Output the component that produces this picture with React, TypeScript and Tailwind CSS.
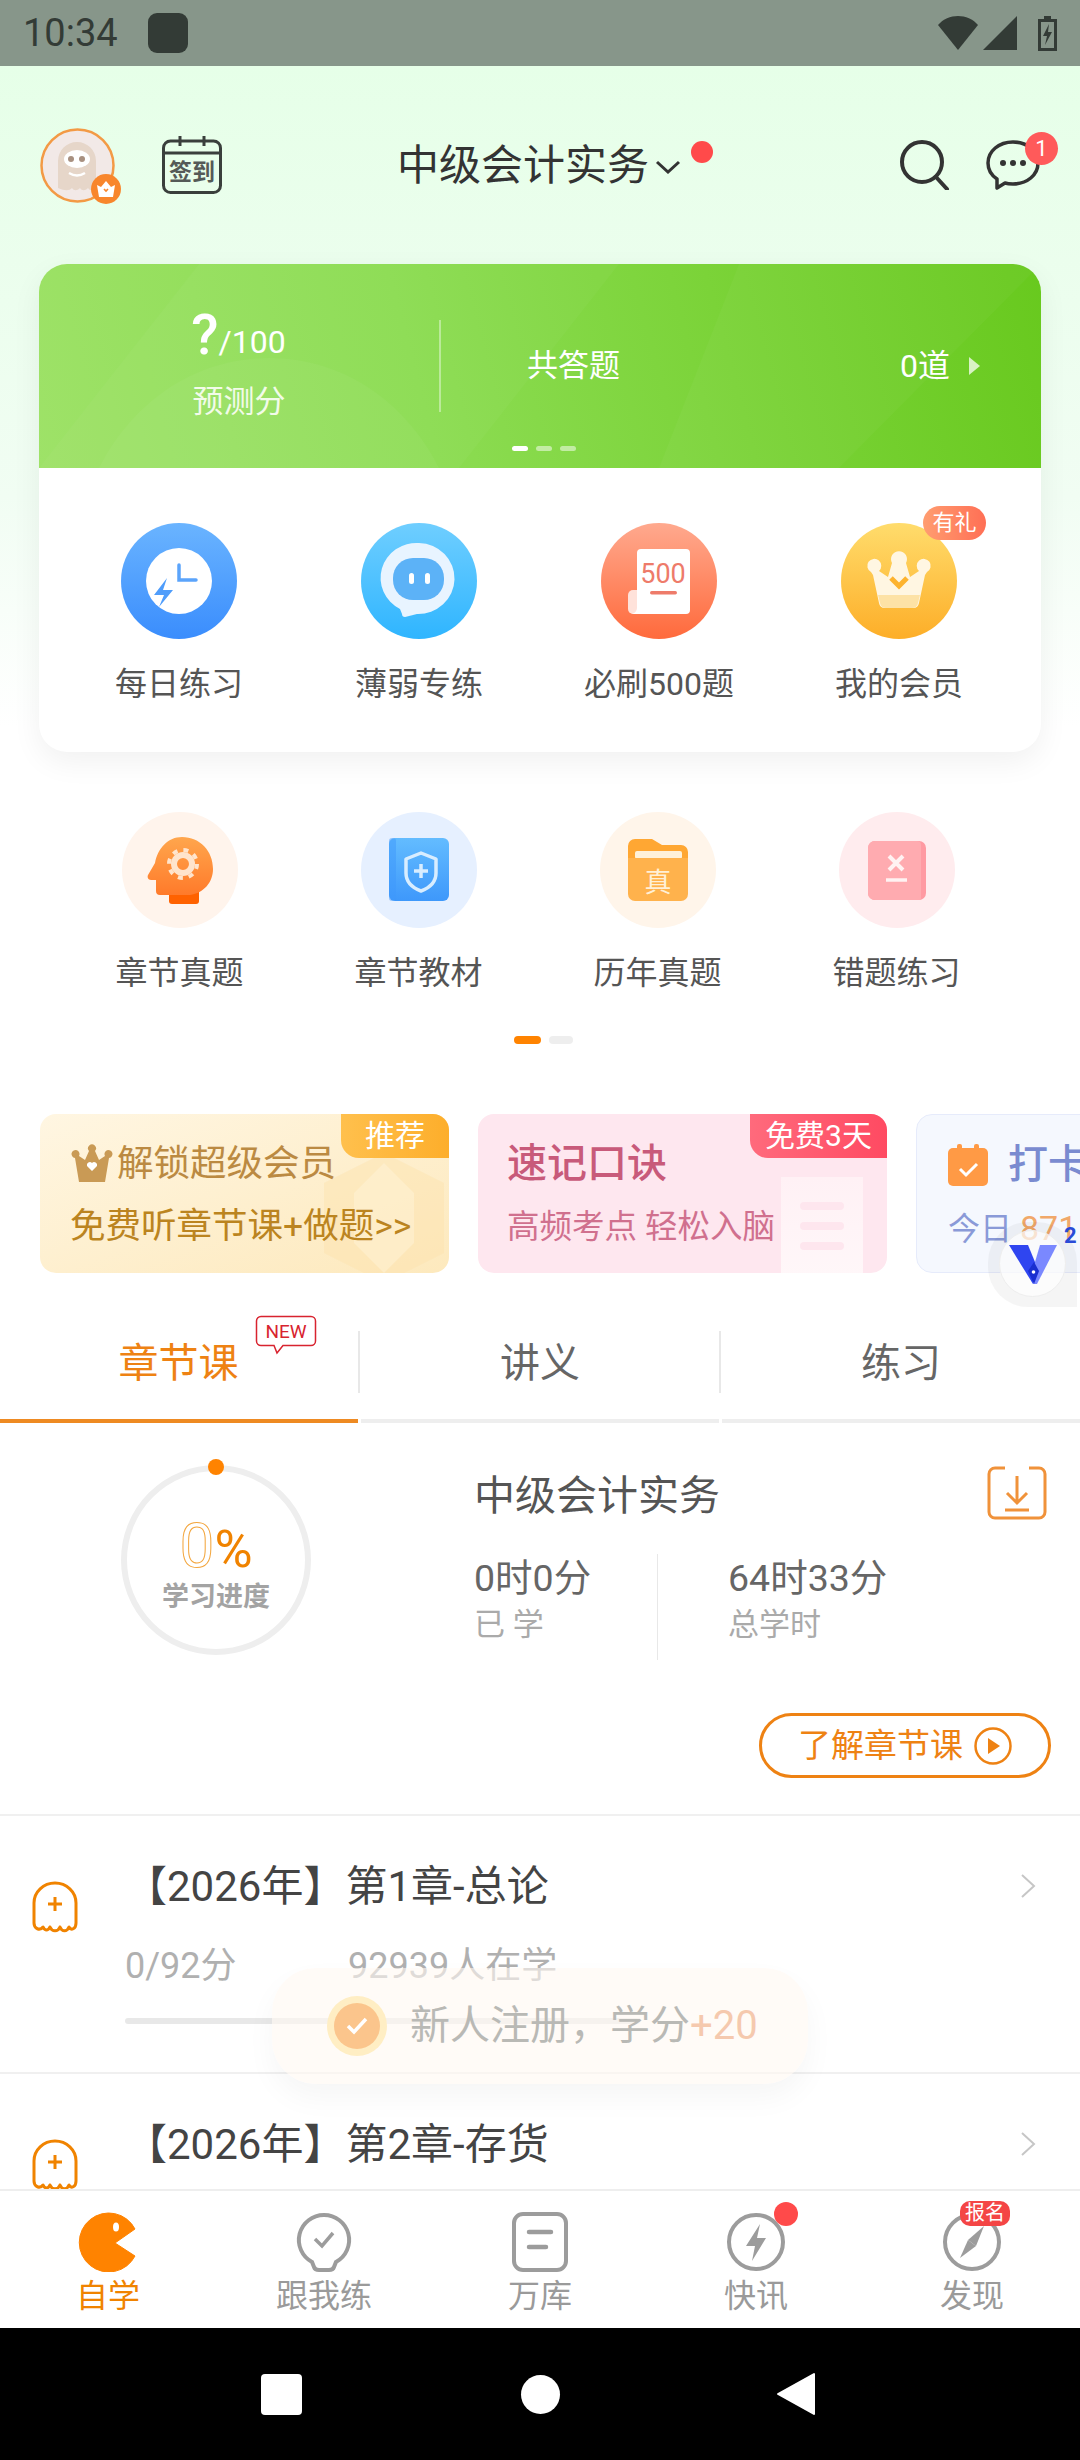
import type { ReactNode } from 'react';

function Ghost({ className }: { className: string }) {
  return (
    <svg viewBox="1 0 46 52" className={className} fill="none">
      <path
        d="M3 42V22a21 20 0 0 1 42 0v20c0 6-5 8-7 4-2 5-7 5-9 0-2 5-8 5-10 0-2 4-5 4-7 0-3 4-9 2-9-4z"
        stroke="#f08300"
        strokeWidth="3"
        strokeLinejoin="round"
      />
      <path d="M24 16v14M17 23h14" stroke="#f08300" strokeWidth="3" />
    </svg>
  );
}

function Avatar() {
  return (
    <div className="relative w-[75px] h-[75px]">
      <svg viewBox="0 0 75 75" className="w-[75px] h-[75px]">
        <circle cx="37.5" cy="37.5" r="36" fill="#f2e9e7" stroke="#f39a45" strokeWidth="2.5" />
        <path
          d="M18 60V33a19 19 0 0 1 38 0v27c-3 3-6 3-8 0-3 3-6 3-8 0-3 3-6 3-8 0-3 3-7 3-14 0z"
          fill="#e6d6c9"
        />
        <ellipse cx="37" cy="31" rx="13" ry="9" fill="#fff" />
        <circle cx="31" cy="31" r="3" fill="#a89080" />
        <circle cx="42" cy="31" r="3" fill="#a89080" />
        <path d="M29 45c5 3 11 3 16 0" stroke="#fff" strokeWidth="2.5" fill="none" />
      </svg>
      <div className="absolute right-[-6px] bottom-[-1px] w-[30px] h-[30px] rounded-full bg-[#f8862c] flex items-center justify-center">
        <svg viewBox="0 0 20 18" className="w-[20px] h-[18px]">
          <path d="M1 5l4 2 5-6 5 6 4-2-2 12H3z" fill="#fff" />
          <path d="M8 9l2 2 2-2" stroke="#f8862c" strokeWidth="1.6" fill="none" />
        </svg>
      </div>
    </div>
  );
}

function SignIcon() {
  return (
    <svg viewBox="0 0 60 58" className="w-[60px] h-[58px]">
      <rect x="1.5" y="5" width="57" height="51.5" rx="7" fill="none" stroke="#3a3f3c" strokeWidth="3" />
      <path d="M2 17h56M18 0v10M42 0v10" stroke="#3a3f3c" strokeWidth="3" />
      <text x="30" y="44" textAnchor="middle" fontSize="23" fontWeight="700" fill="#555a57" fontFamily="Noto Sans CJK SC">
        签到
      </text>
    </svg>
  );
}

const PRIMARY_ITEMS: { label: string; bg: string; icon: ReactNode; badge?: string }[] = [
  {
    label: '每日练习',
    bg: 'bg-[linear-gradient(180deg,#6ab4ff,#3a8dfd)]',
    icon: (
      <>
        <circle cx="58" cy="58" r="33" fill="#fff" />
        <path d="M58 42v15h17" stroke="#5ba4fb" strokeWidth="3.5" fill="none" strokeLinecap="round" />
        <path d="M46 55L33 72h10l-5 12 14-17H42z" fill="#4f9dfb" />
      </>
    ),
  },
  {
    label: '薄弱专练',
    bg: 'bg-[linear-gradient(180deg,#6fceff,#2fb5ff)]',
    icon: (
      <>
        <path d="M58 20a36 35 0 1 1-2 71l-12 3c-2 0-3-1-3-3l-2-5A36 35 0 0 1 58 20z" fill="#e8f4ff" />
        <rect x="32" y="35" width="51" height="42" rx="20" fill="#5cb2f7" />
        <rect x="48" y="50" width="5" height="11" rx="2.5" fill="#fff" />
        <rect x="64" y="50" width="5" height="11" rx="2.5" fill="#fff" />
      </>
    ),
  },
  {
    label: '必刷500题',
    bg: 'bg-[linear-gradient(180deg,#ffa98e,#ff6a3c)]',
    icon: (
      <>
        <path d="M27 72a5 5 0 0 1 5-5h6v24h-6a5 5 0 0 1-5-5z" fill="#ffe2da" />
        <path d="M36 30a4 4 0 0 1 4-4h45a4 4 0 0 1 4 4v57a4 4 0 0 1-4 4H30a6 6 0 0 0 6-6z" fill="#fff" />
        <text x="62" y="60" textAnchor="middle" fontSize="27" fill="#ee7b6a" fontFamily="Roboto">
          500
        </text>
        <rect x="49" y="68" width="27" height="3.5" rx="1.7" fill="#ee7b6a" />
      </>
    ),
  },
  {
    label: '我的会员',
    bg: 'bg-[linear-gradient(180deg,#ffdc6c,#fdae28)]',
    badge: '有礼',
    icon: (
      <>
        <path
          d="M32 52l-2-3a7 7 0 1 1 8-1l9 6 4-14a8 8 0 1 1 14 0l4 14 9-6a7 7 0 1 1 8 1l-2 3-6 28a6 6 0 0 1-6 5H44a6 6 0 0 1-6-5z"
          fill="#fff6e2"
        />
        <path d="M37 72h42l-2 8a6 6 0 0 1-6 5H45a6 6 0 0 1-6-5z" fill="#fde2a6" />
        <path d="M50 55l8 8 8-8" stroke="#fdb32f" strokeWidth="5" fill="none" />
      </>
    ),
  },
];

const SECONDARY_ITEMS: { label: string; bg: string; icon: ReactNode }[] = [
  {
    label: '章节真题',
    bg: 'bg-[#fff4ec]',
    icon: (
      <>
        <defs>
          <linearGradient id="head" x1="0" y1="0" x2="0" y2="1">
            <stop offset="0" stopColor="#ffa64d" />
            <stop offset="1" stopColor="#ff7a2a" />
          </linearGradient>
        </defs>
        <rect x="47" y="70" width="30" height="22" rx="3" fill="#ff6200" />
        <path
          d="M60 25c18 0 31 14 31 32 0 13-9 24-23 26H38a4 4 0 0 1-4-4V68h-5c-3 0-4-3-3-5l7-12c3-15 13-26 27-26z"
          fill="url(#head)"
        />
        <circle cx="61" cy="52" r="9" fill="none" stroke="#ffe4cc" strokeWidth="6" />
        <circle cx="61" cy="52" r="14" fill="none" stroke="#ffe4cc" strokeWidth="4" strokeDasharray="5 5.99" />
      </>
    ),
  },
  {
    label: '章节教材',
    bg: 'bg-[#e6f0ff]',
    icon: (
      <>
        <defs>
          <linearGradient id="book" x1="0" y1="0" x2="0" y2="1">
            <stop offset="0" stopColor="#63bcff" />
            <stop offset="1" stopColor="#3e98fb" />
          </linearGradient>
        </defs>
        <rect x="28" y="26" width="60" height="63" rx="6" fill="url(#book)" />
        <rect x="28" y="26" width="7" height="63" rx="3" fill="#3e98fb" opacity="0.5" />
        <path
          d="M60 41l15 6v14c0 9-7 15-15 18-8-3-15-9-15-18V47z"
          fill="none"
          stroke="#d8edff"
          strokeWidth="3.5"
          strokeLinejoin="round"
        />
        <path d="M60 52v14M53 59h14" stroke="#d8edff" strokeWidth="3.5" />
      </>
    ),
  },
  {
    label: '历年真题',
    bg: 'bg-[#fff5ea]',
    icon: (
      <>
        <path d="M28 34a7 7 0 0 1 7-7h17l10 6h19a7 7 0 0 1 7 7v20H28z" fill="#ffa733" />
        <rect x="35" y="39" width="47" height="8" rx="2" fill="#fff1d9" />
        <path d="M28 46h60v36a7 7 0 0 1-7 7H35a7 7 0 0 1-7-7z" fill="#ffb24c" />
        <text x="58" y="80" textAnchor="middle" fontSize="27" fill="#fff0d6" fontFamily="Noto Sans CJK SC">
          真
        </text>
      </>
    ),
  },
  {
    label: '错题练习',
    bg: 'bg-[#ffecee]',
    icon: (
      <>
        <rect x="29" y="29" width="58" height="59" rx="7" fill="#ff9aa2" />
        <path d="M29 36a7 7 0 0 1 7-7h42a4 4 0 0 1 4 4v55H36a7 7 0 0 1-7-7z" fill="#ffabb0" />
        <path d="M50 44l14 14M64 44L50 58" stroke="#fff2f2" strokeWidth="4" />
        <path d="M47 68h21" stroke="#fff2f2" strokeWidth="3.5" />
      </>
    ),
  },
];

function Chevron() {
  return (
    <svg viewBox="0 0 16 26" className="w-[16px] h-[26px] mr-[44px] shrink-0" fill="none">
      <path d="M2 2l12 11L2 24" stroke="#c6c6c6" strokeWidth="2" />
    </svg>
  );
}

function ChapterRow({ title, children }: { title: string; children?: ReactNode }) {
  return (
    <div className="flex border-b-2 border-[#f0f0f0] h-[258px]">
      <Ghost className="w-[48px] h-[52px] ml-[31px] mt-[65px] shrink-0" />
      <div className="flex-1 ml-[46px] pt-[43px]">
        <div className="text-[42px] leading-[56px] text-[#444] whitespace-nowrap">{title}</div>
        {children}
      </div>
      <div className="pt-[57px]">
        <Chevron />
      </div>
    </div>
  );
}

const NAV_ITEMS: { label: string; active?: boolean; icon: ReactNode; badge?: ReactNode }[] = [
  {
    label: '自学',
    active: true,
    icon: (
      <svg viewBox="0 0 60 60" className="w-[60px] h-[60px]">
        <path d="M57 17L37 31l20 13A29.500 29.500 0 1 1 57 17z" fill="#ff8300" stroke="#ff8300" strokeWidth="1" strokeLinejoin="round" />
        <ellipse cx="38" cy="15" rx="3" ry="4.5" fill="#fff" />
      </svg>
    ),
  },
  {
    label: '跟我练',
    icon: (
      <svg viewBox="0 0 60 60" className="w-[60px] h-[60px]" fill="none" stroke="#9c9c9c" strokeWidth="4">
        <path d="M30 3a25 25 0 0 1 12 47l-2 5c-1 3-3 3-5 3H25c-2 0-4 0-5-3l-2-5A25 25 0 0 1 30 3z" />
        <path d="M21 27l7 7 11-13" strokeWidth="3.5" />
      </svg>
    ),
  },
  {
    label: '万库',
    icon: (
      <svg viewBox="0 0 60 60" className="w-[60px] h-[60px]" fill="none" stroke="#9c9c9c" strokeWidth="4">
        <rect x="4" y="2" width="52" height="56" rx="9" />
        <path d="M19 20h22M19 35h17" strokeWidth="4.5" strokeLinecap="round" />
      </svg>
    ),
  },
  {
    label: '快讯',
    badge: <div className="absolute left-[48px] top-[-10px] w-[24px] h-[24px] rounded-full bg-[#ff4a4a]" />,
    icon: (
      <svg viewBox="0 0 60 60" className="w-[60px] h-[60px]" fill="none">
        <circle cx="30" cy="30" r="27" stroke="#9c9c9c" strokeWidth="4" />
        <path d="M34 12L20 34h9l-3 15 14-23h-9z" fill="#9c9c9c" />
      </svg>
    ),
  },
  {
    label: '发现',
    badge: (
      <div className="absolute left-[18px] top-[-11px] w-[50px] h-[25px] rounded-[10px] bg-[#f44545] text-white text-[20px] leading-[25px] text-center">
        报名
      </div>
    ),
    icon: (
      <svg viewBox="0 0 60 60" className="w-[60px] h-[60px]" fill="none">
        <circle cx="30" cy="30" r="27" stroke="#9c9c9c" strokeWidth="4" />
        <path d="M42 14L34 34 26 28z" fill="#9c9c9c" />
        <path d="M18 46l8-18 8 6z" fill="#9c9c9c" />
      </svg>
    ),
  },
];

export default function App() {
  return (
    <div className="relative w-[1080px] h-[2460px] flex flex-col overflow-hidden bg-white font-[Roboto,'Noto_Sans_CJK_SC',sans-serif]">
      {/* Status bar */}
      <div className="h-[66px] shrink-0 bg-[#87968a] flex items-center pl-[23px] pr-[23px] text-[#333b36]">
        <span className="text-[38px] leading-[66px]">10:34</span>
        <div className="w-[40px] h-[40px] rounded-[9px] bg-[#333b36] ml-[30px]" />
        <div className="flex-1" />
        <svg viewBox="0 0 40 34" className="w-[40px] h-[34px]">
          <path d="M0 9c10-12 30-12 40 0L20 34z" fill="#333b36" />
        </svg>
        <svg viewBox="0 0 34 34" className="w-[34px] h-[34px] ml-[5px]">
          <path d="M34 0v34H0z" fill="#333b36" />
        </svg>
        <svg viewBox="0 0 19 35" className="w-[19px] h-[35px] ml-[21px]">
          <path d="M6 0h7v3h6v32H0V3h6z" fill="#333b36" />
          <rect x="3" y="6" width="13" height="26" fill="#87968a" />
          <path d="M11 8L5 20h4l-2 9 7-13h-4z" fill="#333b36" />
        </svg>
      </div>

      {/* Scrolling content */}
      <div className="flex-1 min-h-0 overflow-hidden bg-[linear-gradient(180deg,#e6ffe8_0,#f1fdf3_430px,#fff_660px)]">
        {/* Header */}
        <div className="h-[198px] flex items-center pl-[40px] relative">
          <Avatar />
          <div className="ml-[47px] -mt-[1px]">
            <SignIcon />
          </div>
          <div className="ml-[175px] flex items-center text-[42px] leading-[56px] text-[#333] mt-[1px]">
            中级会计实务
            <svg viewBox="0 0 26 14" className="w-[26px] h-[14px] ml-[6px] mt-[2px]" fill="none">
              <path d="M2 2l11 10L24 2" stroke="#333" strokeWidth="3" />
            </svg>
            <div className="w-[22px] h-[22px] rounded-full bg-[#ff4a4a] ml-[10px] -mt-[28px]" />
          </div>
          <div className="flex-1" />
          <svg viewBox="0 0 52 50" className="w-[52px] h-[50px] mr-[35px]" fill="none">
            <circle cx="23" cy="22" r="20" stroke="#333" strokeWidth="4" />
            <path d="M37 37l11 12" stroke="#333" strokeWidth="4" strokeLinecap="round" />
          </svg>
          <div className="relative mr-[40px]">
            <svg viewBox="0 0 54 50" className="w-[54px] h-[50px]" fill="none">
              <path d="M27 2c14 0 25 9 25 21s-11 21-25 21c-3 0-5 0-8-1l-8 5v-9C5 35 2 29 2 23 2 11 13 2 27 2z" stroke="#333" strokeWidth="3.5" strokeLinejoin="round" />
              <circle cx="17" cy="23" r="3" fill="#333" />
              <circle cx="27" cy="23" r="3" fill="#333" />
              <circle cx="37" cy="23" r="3" fill="#333" />
            </svg>
            <div className="absolute left-[39px] top-[-8px] w-[33px] h-[33px] rounded-full bg-[#ff5a5a] text-white text-[22px] leading-[33px] text-center">
              1
            </div>
          </div>
        </div>

        {/* Score card */}
        <div className="mx-[39px] rounded-[28px] overflow-hidden bg-white shadow-[0_10px_30px_rgba(0,0,0,0.06)]">
          <div className="relative h-[204px] flex flex-col text-white bg-[linear-gradient(75deg,#9ee268_0%,#8cdc52_38%,#7bd338_68%,#68c91e_100%)]">
            <svg viewBox="0 0 1002 204" className="absolute inset-0 w-[1002px] h-[204px]">
              <path d="M0 204L160 0h420L420 204z" fill="#fff" opacity="0.03" />
              <path d="M620 204L700 0h302L800 204z" fill="#fff" opacity="0.03" />
              <path d="M60 204c30-60 90-110 170-110s140 50 170 110z" fill="#fff" opacity="0.04" />
            </svg>
            <div className="relative flex mt-[46px] h-[106px]">
              <div className="w-[400px] flex flex-col items-center">
                <div className="flex items-end h-[50px] ml-[-1px]">
                  <span className="text-[56px] leading-[50px] font-medium">?</span>
                  <span className="text-[32px] leading-[36px]">/100</span>
                </div>
                <div className="text-[31px] leading-[44px] mt-[20px] text-[#f2fbe9]">预测分</div>
              </div>
              <div className="w-[2px] h-[92px] mt-[10px] bg-white/40" />
              <div className="flex-1 flex items-center h-[92px] pl-[86px] text-[31px] mt-[10px]">
                <span>共答题</span>
                <span className="ml-auto text-[32px]">0道</span>
                <svg viewBox="0 0 11 18" className="w-[11px] h-[18px] ml-[19px] mr-[61px]">
                  <path d="M0 0l11 9-11 9z" fill="#d8f2c4" />
                </svg>
              </div>
            </div>
            <div className="relative flex justify-center gap-[8px] mt-[30px] pl-[7px]">
              <div className="w-[16px] h-[5px] rounded-full bg-white" />
              <div className="w-[16px] h-[5px] rounded-full bg-white/50" />
              <div className="w-[16px] h-[5px] rounded-full bg-white/50" />
            </div>
          </div>
          <div className="h-[284px] grid grid-cols-4 pl-[20px] pr-[22px] pt-[55px]">
            {PRIMARY_ITEMS.map((item) => (
              <div key={item.label} className="flex flex-col items-center">
                <div className={`relative w-[116px] h-[116px] rounded-full ${item.bg}`}>
                  <svg viewBox="0 0 116 116" className="w-[116px] h-[116px]">
                    {item.icon}
                  </svg>
                  {item.badge && (
                    <div className="absolute left-[82px] top-[-17px] w-[63px] h-[34px] rounded-full bg-[linear-gradient(90deg,#ff9d70,#ff6f55)] text-white text-[22px] leading-[34px] text-center">
                      {item.badge}
                    </div>
                  )}
                </div>
                <div className="mt-[23px] text-[32px] leading-[44px] text-[#555]">{item.label}</div>
              </div>
            ))}
          </div>
        </div>

        {/* Secondary entries */}
        <div className="grid grid-cols-4 pl-[60px] pr-[64px] mt-[60px]">
          {SECONDARY_ITEMS.map((item) => (
            <div key={item.label} className="flex flex-col items-center">
              <div className={`w-[116px] h-[116px] rounded-full ${item.bg}`}>
                <svg viewBox="0 0 116 116" className="w-[116px] h-[116px]">
                  {item.icon}
                </svg>
              </div>
              <div className="mt-[23px] text-[32px] leading-[44px] text-[#555]">{item.label}</div>
            </div>
          ))}
        </div>
        <div className="flex justify-center gap-[8px] mt-[41px] pl-[6px]">
          <div className="w-[27px] h-[8px] rounded-full bg-[#ff8300]" />
          <div className="w-[24px] h-[8px] rounded-full bg-[#eeeeee]" />
        </div>

        {/* Promo banners */}
        <div className="flex gap-[29px] pl-[40px] mt-[70px] h-[159px] overflow-hidden">
          <div className="relative w-[409px] shrink-0 rounded-[16px] overflow-hidden bg-[linear-gradient(160deg,#fff6e2,#fde9bd)]">
            <svg viewBox="0 0 130 130" className="absolute right-0 bottom-[-10px] w-[130px] h-[130px]">
              <path d="M65 0l60 30v70l-60 30-60-30V30z" fill="#fde3ad" opacity="0.45" />
              <path d="M65 10l30 30v50l-30 30-30-30V40z" fill="#fff3d8" opacity="0.5" />
            </svg>
            <div className="absolute right-0 top-0 w-[108px] h-[44px] rounded-bl-[18px] bg-[linear-gradient(90deg,#ffc04d,#fdae2b)] text-white text-[30px] leading-[44px] text-center">
              推荐
            </div>
            <div className="relative flex items-center pl-[31px] pt-[28px] h-[72px]">
              <svg viewBox="0 0 42 40" className="w-[42px] h-[40px]">
                <path d="M8 38L4 14a4 4 0 1 1 4-2l6 4 4-9a4 4 0 1 1 6 0l4 9 6-4a4 4 0 1 1 4 2l-4 24z" fill="#c99a55" />
                <path d="M21 27l-5-5a3 3 0 0 1 5-3 3 3 0 0 1 5 3z" fill="#fff" />
              </svg>
              <span className="ml-[4px] text-[36.5px] leading-[44px] text-[#bb8a42] whitespace-nowrap">解锁超级会员</span>
            </div>
            <div className="relative pl-[30px] mt-[18px] text-[35.5px] leading-[44px] text-[#bb8420] whitespace-nowrap">
              免费听章节课+做题&gt;&gt;
            </div>
          </div>

          <div className="relative w-[409px] shrink-0 rounded-[16px] overflow-hidden bg-[#fee7ef]">
            <div className="absolute left-[303px] top-[63px] w-[82px] h-[100px] bg-[linear-gradient(180deg,#fff1f5,#fff7f9)] flex flex-col items-center gap-[12px] pt-[25px]">
              <div className="w-[44px] h-[8px] rounded-full bg-[#fee6ee]" />
              <div className="w-[44px] h-[8px] rounded-full bg-[#fee6ee]" />
              <div className="w-[44px] h-[8px] rounded-full bg-[#fee6ee]" />
            </div>
            <div className="absolute right-0 top-0 w-[137px] h-[44px] rounded-bl-[18px] bg-[linear-gradient(90deg,#ff6a7c,#ff4a62)] text-white text-[30px] leading-[44px] text-center">
              免费3天
            </div>
            <div className="relative pl-[29px] pt-[26px] text-[40px] leading-[48px] font-medium text-[#c85a7a]">速记口诀</div>
            <div className="relative pl-[29px] mt-[17px] text-[32.5px] leading-[44px] text-[#d0708e] whitespace-pre">高频考点 轻松入脑</div>
          </div>

          <div className="w-[300px] shrink-0 rounded-[16px] border border-[#e6ebfb] bg-[#f5f8fe] pl-[31px]">
            <div className="flex items-center pt-[26px]">
              <svg viewBox="0 0 40 42" className="w-[40px] h-[42px]">
                <rect x="0" y="4" width="40" height="38" rx="5" fill="#ff9a45" />
                <rect x="9" y="0" width="5" height="8" rx="2" fill="#ff9a45" />
                <rect x="26" y="0" width="5" height="8" rx="2" fill="#ff9a45" />
                <path d="M12 25l6 6 11-11" stroke="#fff" strokeWidth="3" fill="none" />
              </svg>
              <span className="ml-[20px] text-[40px] leading-[48px] font-medium text-[#7a8bd0]">打卡</span>
            </div>
            <div className="mt-[17px] text-[32px] leading-[44px] text-[#8a9ad8]">
              今日 <span className="text-[#f1a86a] text-[34px]">871</span>
            </div>
          </div>
        </div>

        {/* Tabs */}
        <div className="flex mt-[58px] h-[92px]">
          <div className="relative w-[358px] border-b-[4px] border-[#ee8a22]">
            <div className="h-[62px] pt-[4px] flex items-center justify-center text-[40px] text-[#ee8213] pr-[1px]">章节课</div>
            <svg viewBox="0 0 62 40" className="absolute left-[255px] top-[-16px] w-[62px] h-[40px]">
              <path d="M6 1.5h50a4.5 4.5 0 0 1 4.5 4.5v20a4.5 4.5 0 0 1-4.5 4.5H28L22 38l-3-7.500H6A4.500 4.500 0 0 1 1.500 26V6A4.500 4.500 0 0 1 6 1.500z" fill="#fff" stroke="#d8232f" strokeWidth="1.500" />
              <text x="31" y="23" textAnchor="middle" fontSize="19" fill="#d8232f" fontFamily="Roboto">
                NEW
              </text>
            </svg>
          </div>
          <div className="w-[2px] h-[62px] bg-[#e8e8e8] shrink-0" />
          <div className="w-[358px] ml-[1px] border-b-[4px] border-[#eeeeee]">
            <div className="h-[62px] pt-[4px] flex items-center justify-center text-[40px] text-[#666]">讲义</div>
          </div>
          <div className="w-[2px] h-[62px] bg-[#e8e8e8] shrink-0" />
          <div className="flex-1 ml-[1px] border-b-[4px] border-[#eeeeee]">
            <div className="h-[62px] pt-[4px] flex items-center justify-center text-[40px] text-[#666]">练习</div>
          </div>
        </div>

        {/* Progress summary */}
        <div className="relative h-[393px] border-b-2 border-[#f0f0f0] flex">
          <div className="relative ml-[121px] mt-[42px] w-[190px] h-[190px] rounded-full border-[6px] border-[#eeeeee] flex flex-col items-center shrink-0">
            <div className="absolute top-[-12px] w-[16px] h-[16px] rounded-full bg-[#ff8300]" />
            <div className="flex items-baseline mt-[48px] h-[54px]">
              <span className="text-[62px] leading-[54px] text-transparent [-webkit-text-stroke:1px_#f3a63e]">0</span>
              <span className="text-[52px] leading-[54px] text-[#f08300]">%</span>
            </div>
            <div className="mt-[7px] text-[27px] leading-[34px] font-bold text-[#a3a3a3] whitespace-nowrap">学习进度</div>
          </div>
          <div className="ml-[163px] flex-1 pt-[45px]">
            <div className="text-[41px] leading-[56px] text-[#555]">中级会计实务</div>
            <div className="flex mt-[30px]">
              <div className="w-[184px] h-[106px] border-r border-[#e8e8e8]">
                <div className="text-[37.5px] leading-[48px] text-[#666]">0时0分</div>
                <div className="text-[31px] leading-[40px] text-[#aaa] mt-[3px] whitespace-pre">已 学</div>
              </div>
              <div className="pl-[70px]">
                <div className="text-[37.5px] leading-[48px] text-[#666]">64时33分</div>
                <div className="text-[31px] leading-[40px] text-[#aaa] mt-[3px]">总学时</div>
              </div>
            </div>
          </div>
          <svg viewBox="0 0 60 54" className="absolute left-[987px] top-[43px] w-[60px] h-[54px]" fill="none" stroke="#f0923a" strokeWidth="3">
            <path d="M18 2H8a6 6 0 0 0-6 6v38a6 6 0 0 0 6 6h44a6 6 0 0 0 6-6V8a6 6 0 0 0-6-6H42" />
            <path d="M30 10v26M20 27l10 10 10-10M18 44h24" />
          </svg>
          <div className="absolute left-[759px] top-[290px] w-[292px] h-[65px] rounded-full border-[3px] border-[#ee8213] flex items-center pl-[36px] text-[33px] text-[#ee8213]">
            了解章节课
            <svg viewBox="0 0 38 38" className="w-[38px] h-[38px] ml-[11px]" fill="none">
              <circle cx="19" cy="19" r="17.500" stroke="#ee8213" strokeWidth="2.500" />
              <path d="M14 11l12 8-12 8z" fill="#ee8213" />
            </svg>
          </div>
        </div>

        {/* Chapter list */}
        <ChapterRow title="【2026年】第1章-总论">
          <div className="flex mt-[28px] text-[36px] leading-[46px] text-[#b0b0b0]">
            <span className="w-[223px]">0/92分</span>
            <span>92939人在学</span>
          </div>
          <div className="w-[515px] h-[6px] rounded-full bg-[#e8e8e8] mt-[29px]" />
        </ChapterRow>
        <ChapterRow title="【2026年】第2章-存货" />
      </div>

      {/* Bottom tabs */}
      <div className="h-[139px] shrink-0 bg-white border-t-2 border-[#eeeeee] grid grid-cols-5">
        {NAV_ITEMS.map((item) => (
          <div key={item.label} className="flex flex-col items-center pt-[21px]">
            <div className="relative w-[60px] h-[60px]">
              {item.icon}
              {item.badge}
            </div>
            <div className={`text-[32px] leading-[42px] mt-[3px] ${item.active ? 'text-[#f08300]' : 'text-[#9a9a9a]'}`}>{item.label}</div>
          </div>
        ))}
      </div>

      {/* Android navigation */}
      <div className="h-[132px] shrink-0 bg-black flex items-center justify-center pr-[4px]">
        <div className="w-[41px] h-[41px] rounded-[4px] bg-white" />
        <div className="w-[39px] h-[39px] rounded-full bg-white ml-[219px]" />
        <svg viewBox="0 0 40 44" className="w-[40px] h-[44px] ml-[216px]">
          <path d="M38 2v40L2 22z" fill="#fff" stroke="#fff" strokeWidth="2" strokeLinejoin="round" />
        </svg>
      </div>

      {/* Floating V button */}
      <div className="absolute left-[988px] top-[1222px] w-[89px] h-[85px] rounded-tl-[40px] rounded-tr-[40px] rounded-bl-[40px] bg-black/[0.04] flex items-center justify-center">
        <div className="w-[67px] h-[67px] rounded-full bg-white/70 border border-[#eeeeee] flex items-center justify-center -mt-[2px]">
          <svg viewBox="0 0 48 40" className="w-[48px] h-[40px]">
            <path d="M0 1h19l7 17-2 22z" fill="#2f45f0" />
            <path d="M31 1h17L28 40h-4l2-22z" fill="#7a88ff" />
            <path d="M19 27l6-9 5 9-5 13z" fill="#1a2fd0" />
            <circle cx="24.500" cy="28" r="1.800" fill="#fff" />
          </svg>
        </div>
      </div>
      <div className="absolute left-[1064px] top-[1222px] text-[22px] leading-[28px] font-bold text-[#2a4bd7]">2</div>

      {/* Toast */}
      <div className="absolute left-[272px] top-[1968px] w-[536px] h-[116px] rounded-[44px] bg-[#fff8f2]/60 shadow-[0_14px_30px_rgba(0,0,0,0.04)] flex items-center pl-[55px]">
        <div className="w-[60px] h-[60px] rounded-full bg-[#ffeec4] flex items-center justify-center">
          <div className="w-[46px] h-[46px] rounded-full bg-[#fbc58c] flex items-center justify-center">
            <svg viewBox="0 0 24 20" className="w-[24px] h-[20px]" fill="none">
              <path d="M3 10l6 6L21 3" stroke="#fff" strokeWidth="3.500" />
            </svg>
          </div>
        </div>
        <div className="ml-[23px] text-[40px] leading-[56px] text-[#b9b9b5] whitespace-nowrap">
          新人注册，学分<span className="text-[#f5c9ae]">+20</span>
        </div>
      </div>
    </div>
  );
}
